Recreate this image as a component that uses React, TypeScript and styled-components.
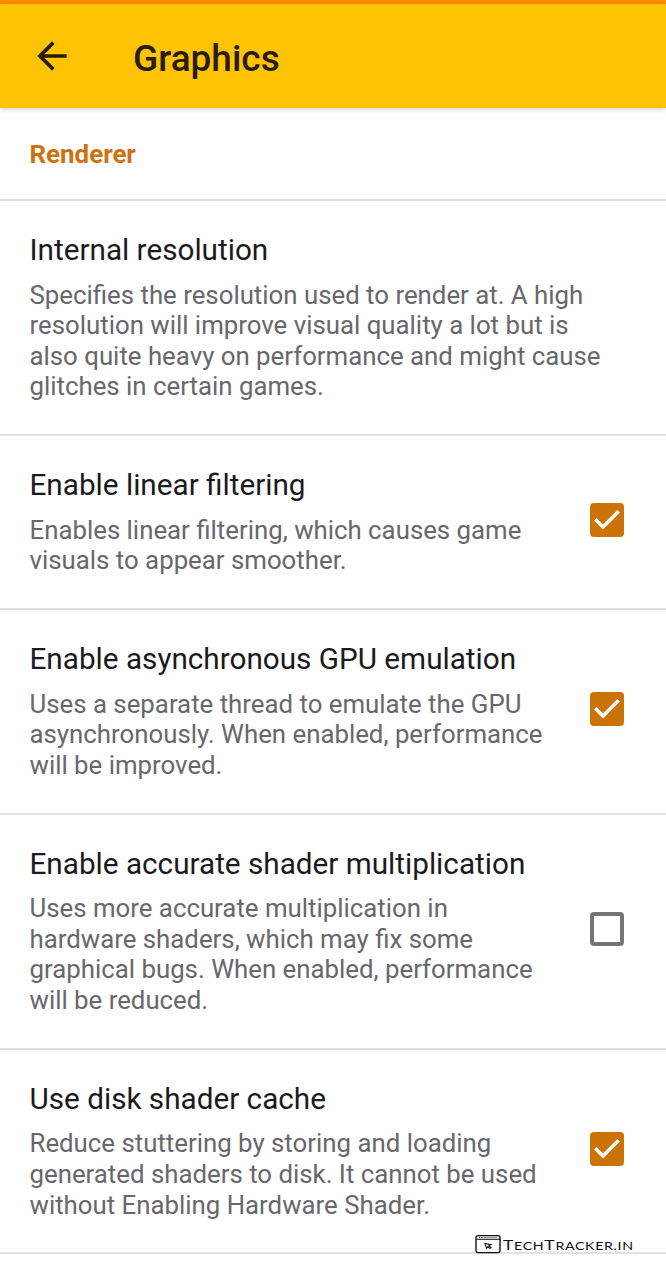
import React from 'react';
import styled, { createGlobalStyle } from 'styled-components';

const GlobalStyle = createGlobalStyle`
  * { box-sizing: border-box; }
  body { margin: 0; background: #fefefe; font-family: Roboto, "Liberation Sans", sans-serif; }
`;

const Screen = styled.main`
  position: relative;
  width: 666px;
  height: 1280px;
  overflow: hidden;
  background: #fefefe;
`;

const StatusStrip = styled.div`
  height: 4px;
  background: #ff8f00;
`;

const AppBar = styled.header`
  display: flex;
  align-items: center;
  height: 104px;
  padding: 4px 0 0 30px;
  background: #ffc305;
  box-shadow: 0 1px 5px rgba(0, 0, 0, 0.2);
`;

const BackButton = styled.button`
  display: flex;
  width: 44px;
  height: 44px;
  margin: 0 59px 4px 0;
  padding: 0;
  border: 0;
  background: none;
  color: #2a1d08;
`;

const AppTitle = styled.h1`
  margin: 2px 0 0;
  font-size: 37px;
  font-weight: 500;
  line-height: 44px;
  color: #2a1d08;
`;

const Category = styled.h2`
  display: flex;
  align-items: center;
  height: 93px;
  margin: 0;
  padding: 1px 29.5px 0;
  border-bottom: 2px solid #e1e1e1;
  font-size: 25.9px;
  font-weight: 700;
  line-height: 30px;
  color: #cc7310;
`;

const Row = styled.section`
  display: flex;
  align-items: center;
  justify-content: space-between;
  padding: 31.3px 42px 32.2px 29.5px;
  border-bottom: 2px solid #e1e1e1;
`;

const RowTitle = styled.h3`
  margin: 0 0 12.3px;
  font-size: 29.7px;
  font-weight: 400;
  line-height: 35px;
  color: #1b1a20;
  white-space: nowrap;
`;

const Summary = styled.p`
  margin: 0;
  font-size: 25.8px;
  line-height: 30.6px;
  color: #68676b;
`;

const Line = styled.span`
  display: block;
  white-space: nowrap;
`;

const Box = styled.span<{ $checked: boolean }>`
  display: flex;
  flex: none;
  width: 34px;
  height: 34px;
  margin-bottom: 4px;
  border-radius: 4px;
  border: ${(p) => (p.$checked ? '0' : '4px solid #757575')};
  background: ${(p) => (p.$checked ? '#cc7308' : 'transparent')};
`;

const Watermark = styled.div`
  position: absolute;
  left: 475px;
  top: 1233px;
  display: flex;
  align-items: center;
  color: #111;
`;

const WatermarkText = styled.span`
  margin: 3px 0 0 2px;
  font-family: Lato, "Liberation Sans", sans-serif;
  font-size: 14px;
  letter-spacing: 0.5px;
  line-height: 18px;
  text-transform: uppercase;
  white-space: nowrap;
  transform: scaleX(1.26);
  transform-origin: left center;
`;

const SmallCaps = styled.span`
  font-size: 11.3px;
`;

function CheckBox({ checked }: { checked: boolean }) {
  return (
    <Box $checked={checked} role="checkbox" aria-checked={checked}>
      {checked && (
        <svg width="34" height="34" viewBox="0 0 34 34" fill="none" stroke="#fffdf8" strokeWidth="3.6">
          <path d="M5.3 16.2 L13 23.9 L28.7 8.2" />
        </svg>
      )}
    </Box>
  );
}

type Setting = { title: string; lines: string[]; checked?: boolean };

const settings: Setting[] = [
  {
    title: 'Internal resolution',
    lines: [
      'Specifies the resolution used to render at. A high',
      'resolution will improve visual quality a lot but is',
      'also quite heavy on performance and might cause',
      'glitches in certain games.',
    ],
  },
  {
    title: 'Enable linear filtering',
    lines: ['Enables linear filtering, which causes game', 'visuals to appear smoother.'],
    checked: true,
  },
  {
    title: 'Enable asynchronous GPU emulation',
    lines: [
      'Uses a separate thread to emulate the GPU',
      'asynchronously. When enabled, performance',
      'will be improved.',
    ],
    checked: true,
  },
  {
    title: 'Enable accurate shader multiplication',
    lines: [
      'Uses more accurate multiplication in',
      'hardware shaders, which may fix some',
      'graphical bugs. When enabled, performance',
      'will be reduced.',
    ],
    checked: false,
  },
  {
    title: 'Use disk shader cache',
    lines: [
      'Reduce stuttering by storing and loading',
      'generated shaders to disk. It cannot be used',
      'without Enabling Hardware Shader.',
    ],
    checked: true,
  },
];

export default function App() {
  return (
    <Screen>
      <GlobalStyle />
      <StatusStrip />
      <AppBar>
        <BackButton aria-label="Back">
          <svg width="44" height="44" viewBox="0 0 24 24" fill="currentColor">
            <path d="M20 11H7.83l5.59-5.59L12 4l-8 8 8 8 1.41-1.41L7.83 13H20v-2z" />
          </svg>
        </BackButton>
        <AppTitle>Graphics</AppTitle>
      </AppBar>
      <Category>Renderer</Category>
      {settings.map((s) => (
        <Row key={s.title}>
          <div>
            <RowTitle>{s.title}</RowTitle>
            <Summary>
              {s.lines.map((l) => (
                <Line key={l}>{l}</Line>
              ))}
            </Summary>
          </div>
          {s.checked !== undefined && <CheckBox checked={s.checked} />}
        </Row>
      ))}
      <Watermark>
        <svg width="26" height="20" viewBox="0 0 26 20" fill="none" stroke="currentColor">
          <rect x="1" y="1.6" width="24" height="17" rx="2" strokeWidth="1.4" />
          <path d="M1 5.3H25" strokeWidth="1" />
          <path d="M4 3.5H8" strokeWidth="1" strokeDasharray="1 0.7" />
          <path d="M9 3.5H22" strokeWidth="1.4" stroke="#999" />
          <path d="M9.8 9.5L16 10.6L13.8 11.8L16 13.6L14.8 14.4L12.8 12.8L11.7 14.2Z" strokeWidth="1.1" />
        </svg>
        <WatermarkText>
          T<SmallCaps>ech</SmallCaps>T<SmallCaps>racker.in</SmallCaps>
        </WatermarkText>
      </Watermark>
    </Screen>
  );
}
